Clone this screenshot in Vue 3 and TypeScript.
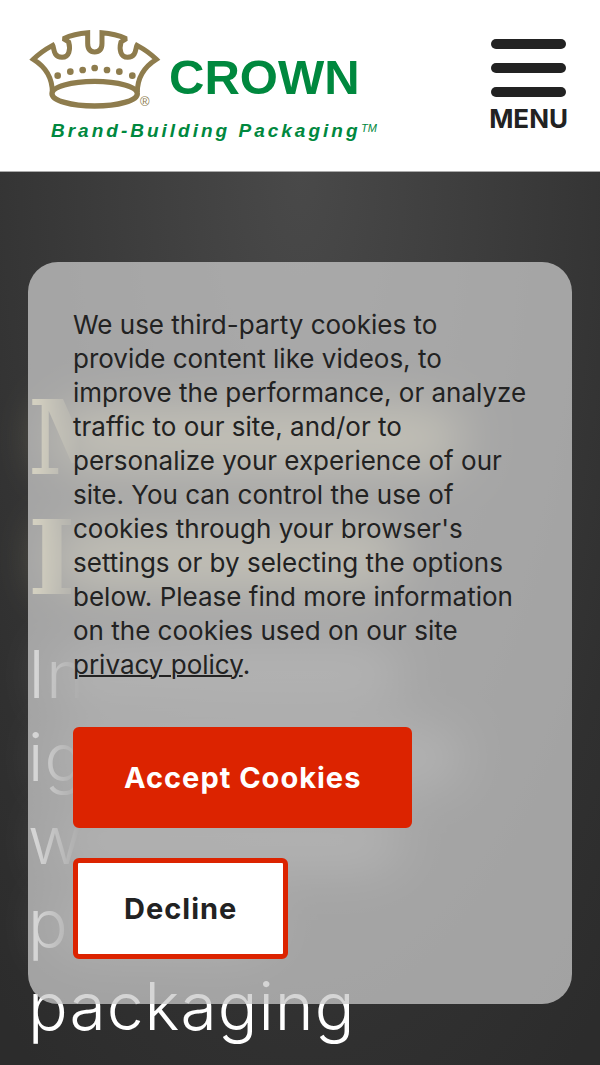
<script setup lang="ts">
import { ref } from 'vue'

const menuOpen = ref(false)
const consentVisible = ref(true)

const titleLines = [
  { text: 'M', kind: 'wide' },
  { text: 'I', kind: 'medium' },
]

const introLines = [
  { text: 'In', kind: 'medium' },
  { text: 'ig', kind: 'wide' },
  { text: 'w', kind: 'medium' },
  { text: 'p', kind: 'short' },
]

const crownDots = [
  [113, 167], [151, 155], [188, 150], [224, 144], [261, 150], [298, 155], [337, 167],
]
</script>

<template>
  <div class="page">
    <header class="site-header">
      <a class="logo" href="#" aria-label="Crown home">
        <svg viewBox="0 0 360 125" role="img" aria-label="Crown, Brand-Building Packaging">
          <g transform="scale(0.33333)">
            <path
              d="M97 217 C97 178 79 142 40 118 C55 103 72 90 98 76 C103 85 99 111 126 112 C148 112 152 88 146 66 L130 56 C152 46 175 40 203 38 L203 70 C203 88 210 96 224 96 C239 96 246 88 246 70 L246 38 C274 40 297 46 319 56 L303 66 C297 88 301 112 323 112 C350 111 346 85 351 76 C377 90 394 103 409 118 C370 142 352 178 352 217"
              fill="none" stroke="#8e7c4d" stroke-width="15" stroke-linejoin="miter" stroke-miterlimit="2" />
            <ellipse cx="224" cy="221" rx="128" ry="37" fill="none" stroke="#8e7c4d" stroke-width="16" />
            <circle v-for="(dot, i) in crownDots" :key="i" :cx="dot[0]" :cy="dot[1]" r="10" fill="#8e7c4d" />
          </g>
          <text class="registered" x="120" y="86">®</text>
          <text class="brand" x="149" y="74">CROWN</text>
          <text class="tagline" x="31" y="117">Brand-Building Packaging</text>
          <text class="trademark" x="341" y="112">TM</text>
        </svg>
      </a>
      <button class="menu-button" type="button" :aria-expanded="menuOpen" @click="menuOpen = !menuOpen">
        <span class="bar"></span>
        <span class="bar"></span>
        <span class="bar"></span>
        <span class="menu-label">MENU</span>
      </button>
    </header>

    <main class="hero">
      <h1 class="title">
        <span v-for="line in titleLines" :key="line.text" class="line" :class="line.kind">
          <span class="fade">{{ line.text }}</span>
        </span>
      </h1>
      <p class="intro">
        <span v-for="line in introLines" :key="line.text" class="line" :class="line.kind">
          <span class="fade">{{ line.text }}</span>
        </span>
        <span class="last-line">packaging</span>
      </p>
    </main>

    <section v-if="consentVisible" class="consent" role="dialog" aria-label="Cookie consent">
      <p class="consent-text">
        We use third-party cookies to provide content like videos, to improve the performance, or analyze
        traffic to our site, and/or to personalize your experience of our site. You can control the use of
        cookies through your browser's settings or by selecting the options below. Please find more
        information on the cookies used on our site <a href="#privacy">privacy policy</a>.
      </p>
      <div class="actions">
        <button class="button accept" type="button" @click="consentVisible = false">Accept Cookies</button>
        <button class="button decline" type="button" @click="consentVisible = false">Decline</button>
      </div>
    </section>
  </div>
</template>

<style>
body {
  margin: 0;
  background: #303030;
}
</style>

<style scoped>
.page {
  position: relative;
  min-height: 100vh;
  display: flex;
  flex-direction: column;
  overflow: hidden;
  font-family: Inter, "Liberation Sans", sans-serif;
  color: #222;
}

.site-header {
  display: flex;
  justify-content: space-between;
  align-items: flex-start;
  box-sizing: border-box;
  min-height: 172px;
  padding: 20px 32px 20px 20px;
  background: #fff;
  border-bottom: 1px solid #aaa;
}

.logo svg {
  display: block;
  width: 360px;
  height: 125px;
}

.brand {
  font: bold 49px "Liberation Sans", sans-serif;
  fill: #00883e;
}

.tagline {
  font: italic bold 19px "Liberation Sans", sans-serif;
  letter-spacing: 3px;
  fill: #00883e;
}

.trademark {
  font: italic 11px "Liberation Sans", sans-serif;
  fill: #00883e;
}

.registered {
  font: 13px "Liberation Sans", sans-serif;
  fill: #8e7c4d;
}

.menu-button {
  display: flex;
  flex-direction: column;
  align-items: center;
  gap: 14px;
  margin: 0;
  padding: 19px 0 0;
  border: 0;
  background: none;
  color: #222;
  font-family: inherit;
  cursor: pointer;
}

.bar {
  width: 75px;
  height: 10px;
  border-radius: 5px;
  background: #222;
}

.menu-label {
  margin-top: -8px;
  font-size: 26px;
  font-weight: 700;
  line-height: 32px;
}

.hero {
  flex: 1;
  padding: 206px 28px 0;
  background: radial-gradient(ellipse 460px 1100px at 50% 0, #494949, #303030 80%, #2c2c2c);
}

.title {
  margin: 0;
  color: #f6e8a8;
  font: bold 102px/120px "DejaVu Serif", serif;
}

.intro {
  margin: 15px 0 0;
  color: #fff;
  font-size: 66px;
  font-weight: 300;
  line-height: 83px;
  letter-spacing: 1px;
}

.line {
  display: grid;
  justify-items: start;
  align-items: center;
}

.fade,
.line::after {
  grid-area: 1 / 1;
}

.fade {
  white-space: nowrap;
  mask-image: linear-gradient(to right, #000 8px, transparent 52px);
}

.line::after {
  content: "";
  height: 54px;
  margin-left: 24px;
  border-radius: 30px;
  background: currentColor;
  filter: blur(26px);
}

.title .line::after {
  opacity: 0.72;
}

.intro .line::after {
  opacity: 0.32;
}

.wide::after {
  width: 410px;
}

.medium::after {
  width: 350px;
}

.short::after {
  width: 220px;
}

.last-line {
  display: block;
}

.consent {
  position: absolute;
  top: 262px;
  left: 28px;
  right: 28px;
  padding: 46px 45px 45px;
  border-radius: 30px;
  background: rgba(200, 200, 200, 0.76);
}

.consent-text {
  margin: 0;
  font-size: 26px;
  line-height: 34px;
}

.consent-text a {
  color: inherit;
  text-decoration-thickness: 2px;
}

.actions {
  display: flex;
  flex-direction: column;
  align-items: flex-start;
  gap: 30px;
  margin-top: 45px;
}

.button {
  padding: 29px 46px;
  border: 5px solid #dc2300;
  border-radius: 6px;
  font-family: inherit;
  font-size: 29px;
  font-weight: 700;
  line-height: 33px;
  letter-spacing: 1px;
  cursor: pointer;
}

.accept {
  background: #dc2300;
  color: #fff;
}

.decline {
  background: #fff;
  color: #222;
}
</style>
